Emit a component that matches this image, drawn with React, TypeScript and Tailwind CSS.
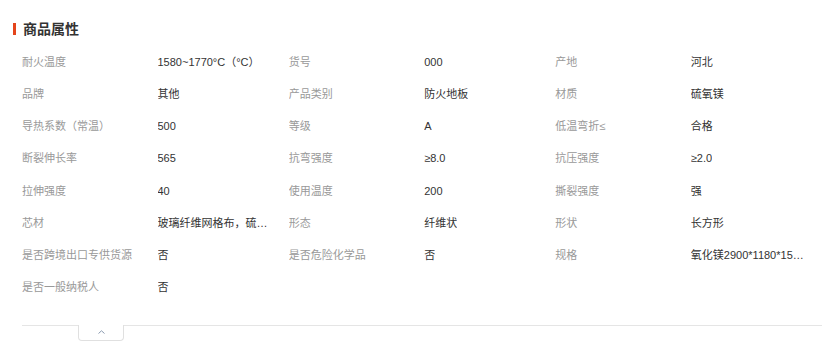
const ROWS: [string, string][][] = [
  [['耐火温度', '1580~1770°C（°C）'], ['货号', '000'], ['产地', '河北']],
  [['品牌', '其他'], ['产品类别', '防火地板'], ['材质', '硫氧镁']],
  [['导热系数（常温）', '500'], ['等级', 'A'], ['低温弯折≤', '合格']],
  [['断裂伸长率', '565'], ['抗弯强度', '≥8.0'], ['抗压强度', '≥2.0']],
  [['拉伸强度', '40'], ['使用温度', '200'], ['撕裂强度', '强']],
  [['芯材', '玻璃纤维网格布，硫氧镁'], ['形态', '纤维状'], ['形状', '长方形']],
  [['是否跨境出口专供货源', '否'], ['是否危险化学品', '否'], ['规格', '氧化镁2900*1180*15mm']],
  [['是否一般纳税人', '否']],
];

export default function App() {
  return (
    <div className="h-[343px] w-[833px] bg-white pt-[21px] font-['Liberation_Sans','Noto_Sans_CJK_SC',sans-serif] text-[11px]">
      <div className="flex items-center pl-[13px]">
        <span className="h-[12px] w-[3px] bg-[#e4441b]" />
        <h2 className="ml-[7px] text-[14px] leading-4 font-bold text-[#333]">商品属性</h2>
      </div>

      <div className="ml-[22px] mt-[9px] w-[800px]">
        {ROWS.map((row, i) => (
          <div key={i} className="grid h-[32.2px] grid-cols-3 items-center">
            {row.map(([label, value]) => (
              <div key={label} className="flex items-center">
                <span className="w-[135.5px] shrink-0 truncate text-[#999]">{label}</span>
                <span className="max-w-[116px] truncate text-[#333]">{value}</span>
              </div>
            ))}
          </div>
        ))}
      </div>

      <div className="ml-[22px] mt-[21px] w-[800px] border-t border-[#e5e5e5]">
        <button className="-mt-px ml-[56px] flex h-[16px] w-[46px] items-center justify-center rounded-b border border-t-0 border-[#e0e0e0] bg-white">
          <svg width="7" height="4" viewBox="0 0 7 4" fill="none">
            <path d="M0.5 3.5L3.5 0.8L6.5 3.5" stroke="#8a9bb0" strokeWidth="1" />
          </svg>
        </button>
      </div>
    </div>
  );
}
